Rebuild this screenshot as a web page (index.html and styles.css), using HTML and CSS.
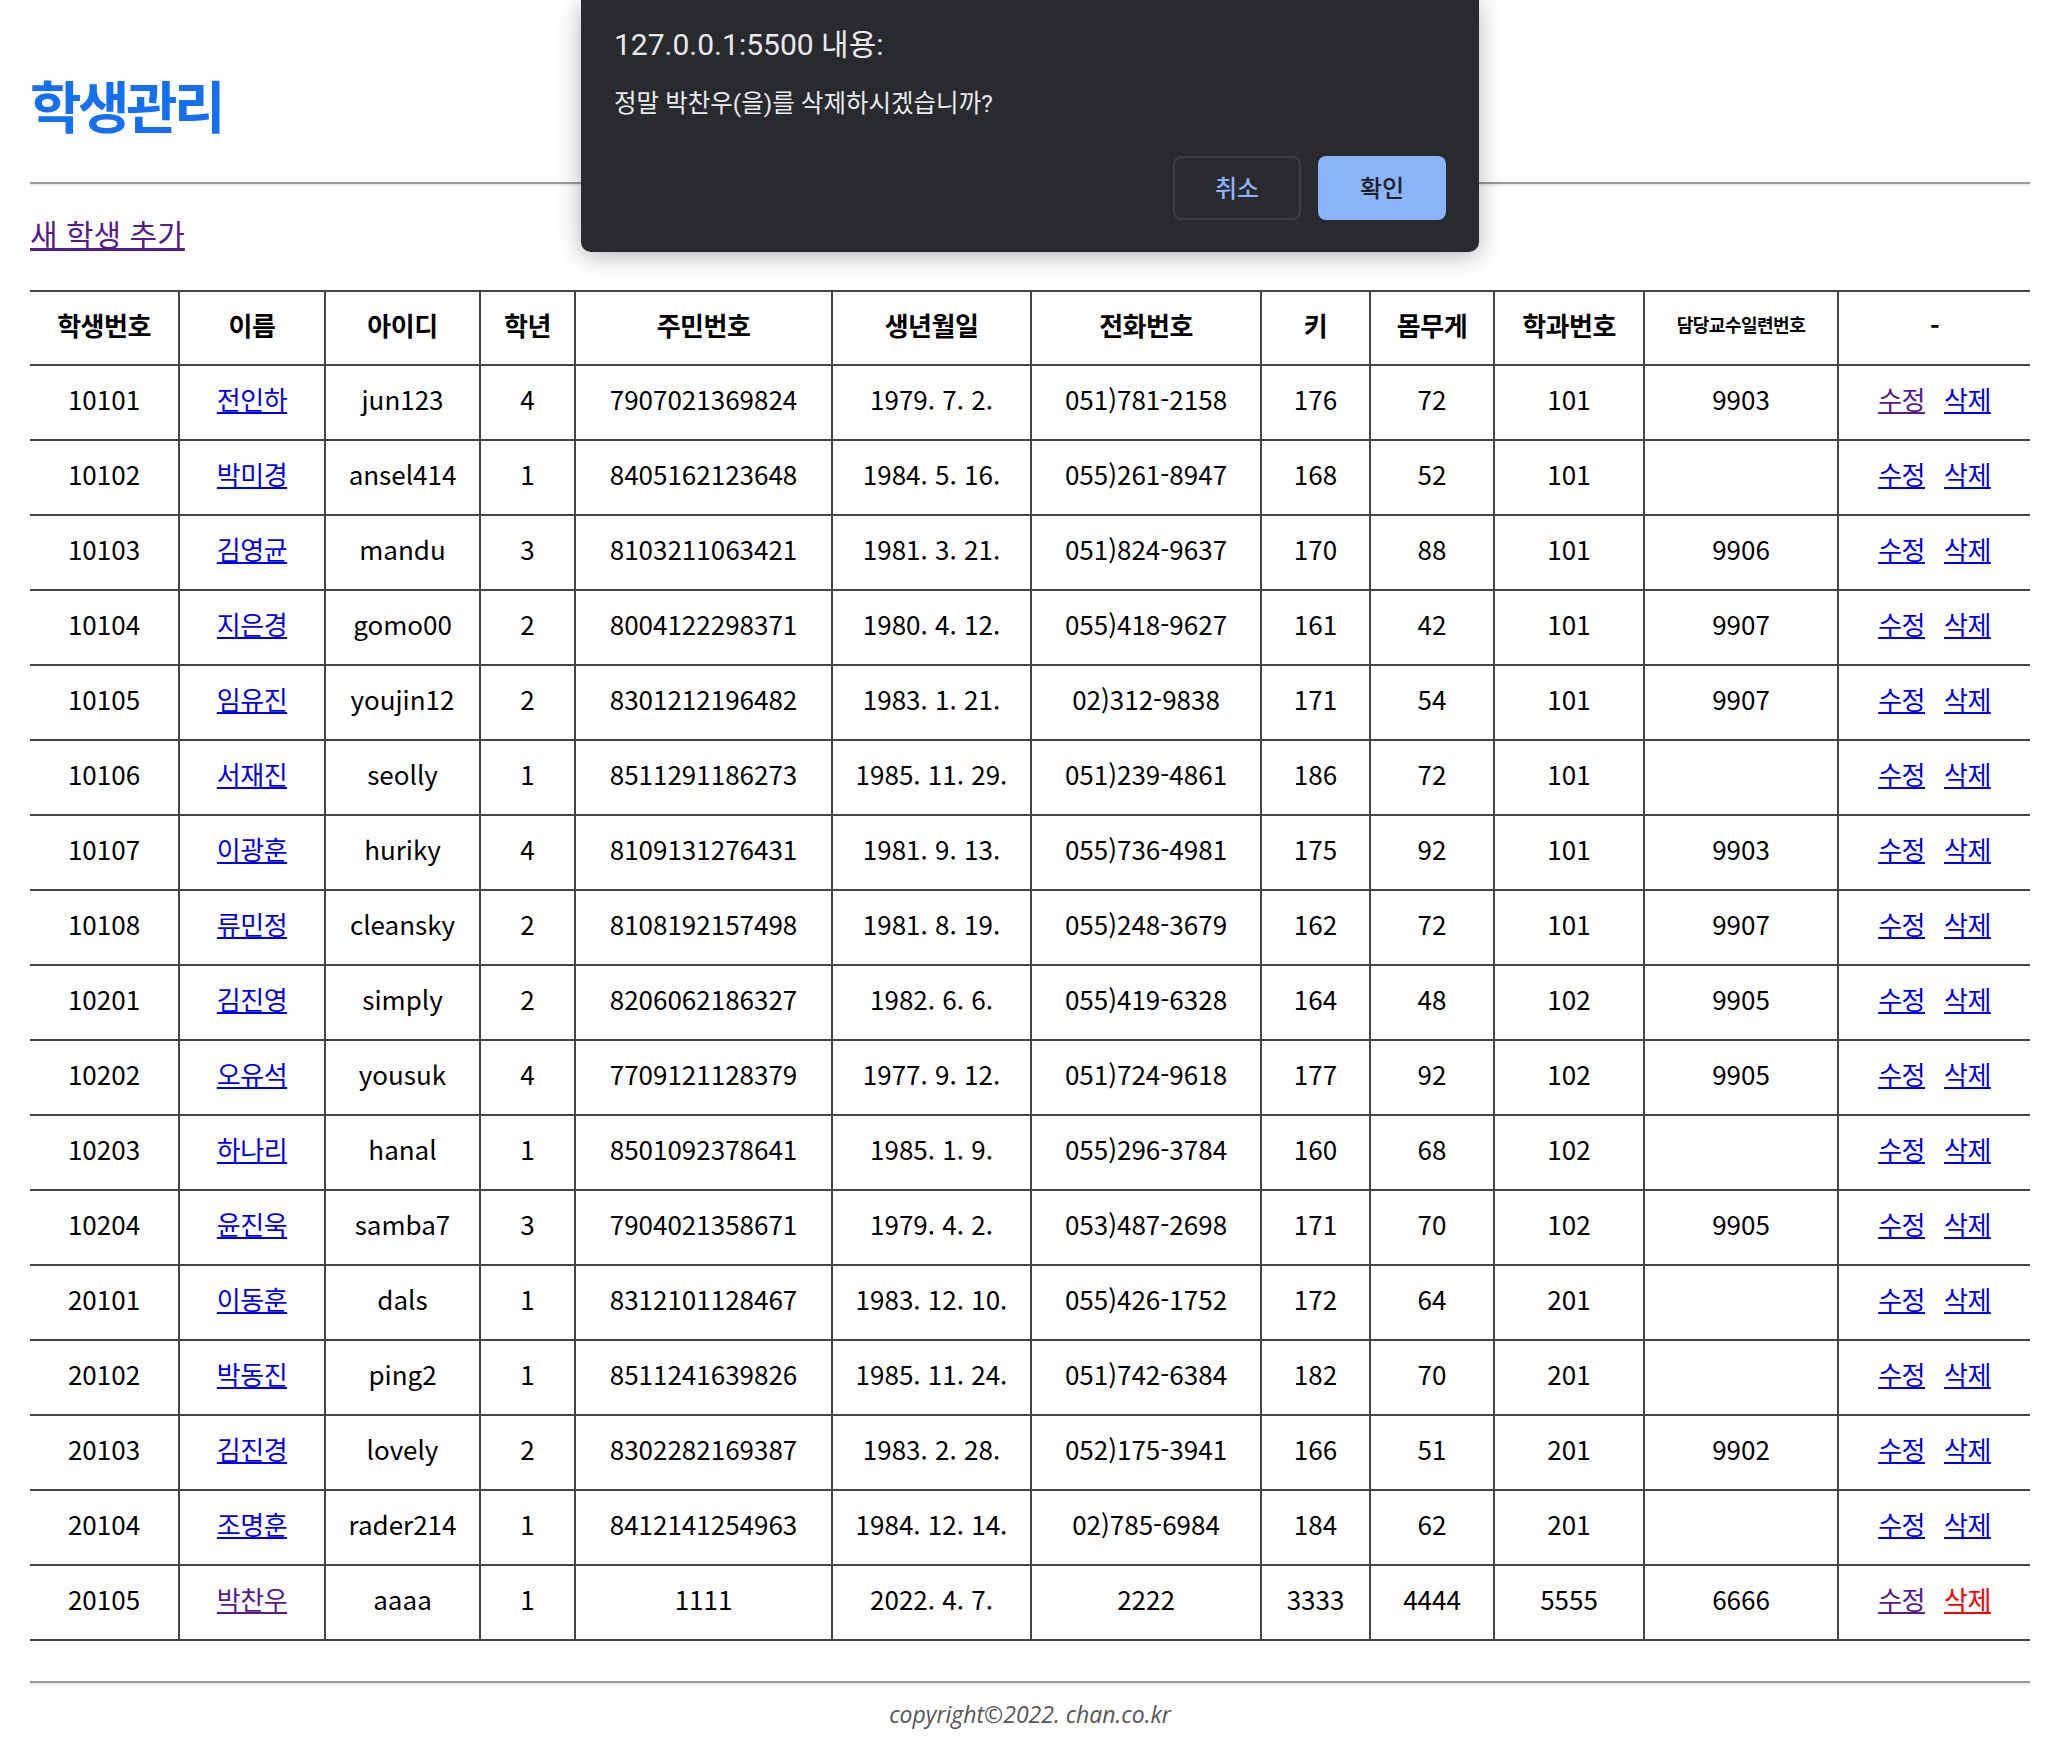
FILE: index.html
```html
<!DOCTYPE html>
<html lang="ko">
<head>
<meta charset="utf-8">
<title>학생관리</title>
<link rel="stylesheet" href="styles.css">
</head>
<body>
<h1 class="title">학생관리</h1>
<hr class="rule">
<p class="add"><a class="visited" href="#">새 학생 추가</a></p>
<table class="students">
<colgroup>
<col class="c1"><col class="c2"><col class="c3"><col class="c4"><col class="c5"><col class="c6"><col class="c7"><col class="c8"><col class="c9"><col class="c10"><col class="c11"><col class="c12">
</colgroup>
<thead>
<tr><th>학생번호</th><th>이름</th><th>아이디</th><th>학년</th><th>주민번호</th><th>생년월일</th><th>전화번호</th><th>키</th><th>몸무게</th><th>학과번호</th><th class="small">담당교수일련번호</th><th>-</th></tr>
</thead>
<tbody>
<tr><td>10101</td><td><a href="#">전인하</a></td><td>jun123</td><td>4</td><td>7907021369824</td><td>1979. 7. 2.</td><td>051)781-2158</td><td>176</td><td>72</td><td>101</td><td>9903</td><td><a class="visited" href="#">수정</a><a class="del" href="#">삭제</a></td></tr>
<tr><td>10102</td><td><a href="#">박미경</a></td><td>ansel414</td><td>1</td><td>8405162123648</td><td>1984. 5. 16.</td><td>055)261-8947</td><td>168</td><td>52</td><td>101</td><td></td><td><a href="#">수정</a><a class="del" href="#">삭제</a></td></tr>
<tr><td>10103</td><td><a href="#">김영균</a></td><td>mandu</td><td>3</td><td>8103211063421</td><td>1981. 3. 21.</td><td>051)824-9637</td><td>170</td><td>88</td><td>101</td><td>9906</td><td><a href="#">수정</a><a class="del" href="#">삭제</a></td></tr>
<tr><td>10104</td><td><a href="#">지은경</a></td><td>gomo00</td><td>2</td><td>8004122298371</td><td>1980. 4. 12.</td><td>055)418-9627</td><td>161</td><td>42</td><td>101</td><td>9907</td><td><a href="#">수정</a><a class="del" href="#">삭제</a></td></tr>
<tr><td>10105</td><td><a href="#">임유진</a></td><td>youjin12</td><td>2</td><td>8301212196482</td><td>1983. 1. 21.</td><td>02)312-9838</td><td>171</td><td>54</td><td>101</td><td>9907</td><td><a href="#">수정</a><a class="del" href="#">삭제</a></td></tr>
<tr><td>10106</td><td><a href="#">서재진</a></td><td>seolly</td><td>1</td><td>8511291186273</td><td>1985. 11. 29.</td><td>051)239-4861</td><td>186</td><td>72</td><td>101</td><td></td><td><a href="#">수정</a><a class="del" href="#">삭제</a></td></tr>
<tr><td>10107</td><td><a href="#">이광훈</a></td><td>huriky</td><td>4</td><td>8109131276431</td><td>1981. 9. 13.</td><td>055)736-4981</td><td>175</td><td>92</td><td>101</td><td>9903</td><td><a href="#">수정</a><a class="del" href="#">삭제</a></td></tr>
<tr><td>10108</td><td><a href="#">류민정</a></td><td>cleansky</td><td>2</td><td>8108192157498</td><td>1981. 8. 19.</td><td>055)248-3679</td><td>162</td><td>72</td><td>101</td><td>9907</td><td><a href="#">수정</a><a class="del" href="#">삭제</a></td></tr>
<tr><td>10201</td><td><a href="#">김진영</a></td><td>simply</td><td>2</td><td>8206062186327</td><td>1982. 6. 6.</td><td>055)419-6328</td><td>164</td><td>48</td><td>102</td><td>9905</td><td><a href="#">수정</a><a class="del" href="#">삭제</a></td></tr>
<tr><td>10202</td><td><a href="#">오유석</a></td><td>yousuk</td><td>4</td><td>7709121128379</td><td>1977. 9. 12.</td><td>051)724-9618</td><td>177</td><td>92</td><td>102</td><td>9905</td><td><a href="#">수정</a><a class="del" href="#">삭제</a></td></tr>
<tr><td>10203</td><td><a href="#">하나리</a></td><td>hanal</td><td>1</td><td>8501092378641</td><td>1985. 1. 9.</td><td>055)296-3784</td><td>160</td><td>68</td><td>102</td><td></td><td><a href="#">수정</a><a class="del" href="#">삭제</a></td></tr>
<tr><td>10204</td><td><a href="#">윤진욱</a></td><td>samba7</td><td>3</td><td>7904021358671</td><td>1979. 4. 2.</td><td>053)487-2698</td><td>171</td><td>70</td><td>102</td><td>9905</td><td><a href="#">수정</a><a class="del" href="#">삭제</a></td></tr>
<tr><td>20101</td><td><a href="#">이동훈</a></td><td>dals</td><td>1</td><td>8312101128467</td><td>1983. 12. 10.</td><td>055)426-1752</td><td>172</td><td>64</td><td>201</td><td></td><td><a href="#">수정</a><a class="del" href="#">삭제</a></td></tr>
<tr><td>20102</td><td><a href="#">박동진</a></td><td>ping2</td><td>1</td><td>8511241639826</td><td>1985. 11. 24.</td><td>051)742-6384</td><td>182</td><td>70</td><td>201</td><td></td><td><a href="#">수정</a><a class="del" href="#">삭제</a></td></tr>
<tr><td>20103</td><td><a href="#">김진경</a></td><td>lovely</td><td>2</td><td>8302282169387</td><td>1983. 2. 28.</td><td>052)175-3941</td><td>166</td><td>51</td><td>201</td><td>9902</td><td><a href="#">수정</a><a class="del" href="#">삭제</a></td></tr>
<tr><td>20104</td><td><a href="#">조명훈</a></td><td>rader214</td><td>1</td><td>8412141254963</td><td>1984. 12. 14.</td><td>02)785-6984</td><td>184</td><td>62</td><td>201</td><td></td><td><a href="#">수정</a><a class="del" href="#">삭제</a></td></tr>
<tr><td>20105</td><td><a class="visited" href="#">박찬우</a></td><td>aaaa</td><td>1</td><td>1111</td><td>2022. 4. 7.</td><td>2222</td><td>3333</td><td>4444</td><td>5555</td><td>6666</td><td><a class="visited" href="#">수정</a><a class="del active" href="#">삭제</a></td></tr>
</tbody>
</table>
<hr class="rule foot-rule">
<p class="copyright">copyright©2022. chan.co.kr</p>

<div class="dialog">
  <div class="dlg-title">127.0.0.1:5500 내용:</div>
  <div class="dlg-msg">정말 박찬우(을)를 삭제하시겠습니까?</div>
  <div class="dlg-actions">
    <button class="btn btn-cancel" type="button">취소</button>
    <button class="btn btn-ok" type="button">확인</button>
  </div>
</div>
</body>
</html>
```
FILE: styles.css
```css
html, body {
  background: #fff;
}
body {
  margin: 0;
  padding: 0 30px;
  font-family: "Noto Sans CJK KR", "Noto Sans", sans-serif;
  color: #000;
}
a {
  color: #0000ee;
  text-decoration: underline;
}
a.visited {
  color: #551a8b;
}
.title {
  margin: 73px 0 0;
  font-size: 56px;
  line-height: 62px;
  font-weight: 700;
  letter-spacing: -3.5px;
  color: #1470f0;
}
.rule {
  margin: 47px 0 0;
  height: 0;
  border: 0;
  border-top: 2px solid #9a9a9a;
  border-bottom: 2px solid #ececec;
}
.add {
  margin: 27px 0 0;
  font-size: 30px;
  line-height: 40px;
}
.students {
  margin-top: 37px;
  width: 2000px;
  border-collapse: collapse;
  table-layout: fixed;
  font-size: 26px;
}
.c1 { width: 149px; }
.c2 { width: 146px; }
.c3 { width: 155px; }
.c4 { width: 95px; }
.c5 { width: 257px; }
.c6 { width: 199px; }
.c7 { width: 230px; }
.c8 { width: 109px; }
.c9 { width: 124px; }
.c10 { width: 150px; }
.c11 { width: 194px; }
.c12 { width: 192px; }
.students th,
.students td {
  border-top: 2px solid #444;
  border-bottom: 2px solid #444;
  border-left: 2px solid #444;
  text-align: center;
  vertical-align: middle;
  padding: 0 0 8px;
  white-space: nowrap;
}
.students th:first-child,
.students td:first-child {
  border-left: 0;
}
.students th {
  height: 64px;
  font-weight: 700;
  letter-spacing: -0.5px;
}
.students th.small {
  font-size: 18px;
}
.students td {
  height: 65px;
}
.students td a {
  letter-spacing: -0.5px;
}
.students td a.del {
  margin-left: 19px;
}
.students td a.active {
  color: #ff0000;
}
.foot-rule {
  margin-top: 40px;
}
.copyright {
  margin: 14px 0 0;
  text-align: center;
  font-family: "Open Sans", "Noto Sans", sans-serif;
  font-style: italic;
  font-size: 23px;
  line-height: 30px;
  color: #555;
}
.dialog {
  position: absolute;
  top: 0;
  left: 581px;
  width: 898px;
  height: 252px;
  box-sizing: border-box;
  padding: 25px 33px 0;
  background: #292a2d;
  border-radius: 0 0 10px 10px;
  box-shadow: 0 4px 24px rgba(0, 0, 0, 0.3);
  font-family: "Roboto", "Noto Sans CJK KR", sans-serif;
}
.dlg-title {
  font-size: 30px;
  line-height: 40px;
  color: #e8eaed;
}
.dlg-msg {
  margin-top: 21px;
  font-size: 24.5px;
  line-height: 36px;
  color: #e8eaed;
}
.dlg-actions {
  display: flex;
  justify-content: flex-end;
  gap: 17px;
  margin-top: 34px;
}
.btn {
  width: 128px;
  height: 64px;
  padding: 0 0 4px;
  border-radius: 8px;
  font-family: "Roboto", "Noto Sans CJK KR", sans-serif;
  font-size: 24px;
  font-weight: 500;
  cursor: pointer;
}
.btn-cancel {
  background: #292a2d;
  border: 2px solid #3c4043;
  color: #8ab4f8;
}
.btn-ok {
  background: #8ab4f8;
  border: 0;
  color: #202124;
}
```
